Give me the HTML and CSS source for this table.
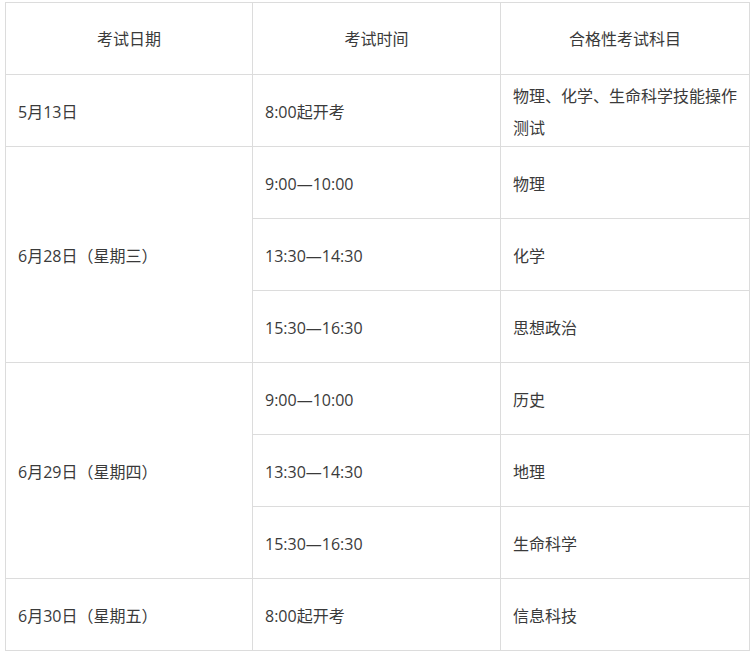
FILE: index.html
```html
<!DOCTYPE html>
<html lang="zh-CN">
<head>
<meta charset="utf-8">
<title>合格性考试安排</title>
<link rel="stylesheet" href="styles.css">
</head>
<body>
<table class="schedule">
  <colgroup>
    <col class="c1"><col class="c2"><col class="c3">
  </colgroup>
  <thead>
    <tr>
      <th>考试日期</th>
      <th>考试时间</th>
      <th>合格性考试科目</th>
    </tr>
  </thead>
  <tbody>
    <tr>
      <td>5月13日</td>
      <td>8:00起开考</td>
      <td>物理、化学、生命科学技能操作测试</td>
    </tr>
    <tr>
      <td rowspan="3">6月28日（星期三）</td>
      <td>9:00—10:00</td>
      <td>物理</td>
    </tr>
    <tr>
      <td>13:30—14:30</td>
      <td>化学</td>
    </tr>
    <tr>
      <td>15:30—16:30</td>
      <td>思想政治</td>
    </tr>
    <tr>
      <td rowspan="3">6月29日（星期四）</td>
      <td>9:00—10:00</td>
      <td>历史</td>
    </tr>
    <tr>
      <td>13:30—14:30</td>
      <td>地理</td>
    </tr>
    <tr>
      <td>15:30—16:30</td>
      <td>生命科学</td>
    </tr>
    <tr>
      <td>6月30日（星期五）</td>
      <td>8:00起开考</td>
      <td>信息科技</td>
    </tr>
  </tbody>
</table>
</body>
</html>
```
FILE: styles.css
```css
html, body {
  margin: 0;
  padding: 0;
  background: #ffffff;
}
body {
  padding: 2px 0 0 5px;
  font-family: "Open Sans", "Noto Sans CJK SC", "Microsoft YaHei", sans-serif;
  font-size: 16px;
  color: #3a3a3a;
}
.schedule {
  border-collapse: collapse;
  table-layout: fixed;
  width: 744px;
}
.schedule .c1 { width: 247px; }
.schedule .c2 { width: 248px; }
.schedule .c3 { width: 249px; }
.schedule th,
.schedule td {
  border: 1px solid #dcdcdc;
  height: 72px;
  padding: 2px 10px 0 12px;
  line-height: 32px;
  vertical-align: middle;
  box-sizing: border-box;
  word-break: break-all;
}
.schedule th {
  font-weight: normal;
  text-align: center;
  padding: 0 12px;
}
.schedule td {
  text-align: left;
}
```
